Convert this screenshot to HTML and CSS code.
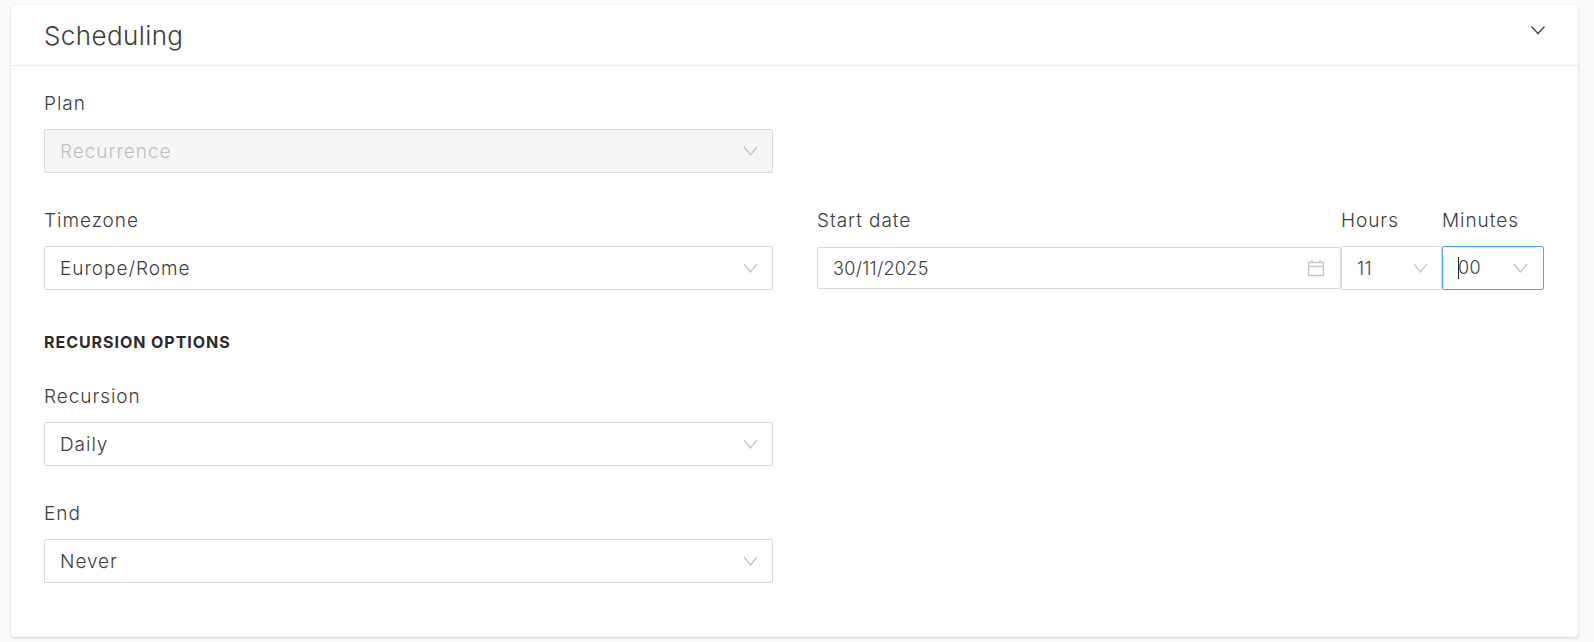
FILE: index.html
```html
<!DOCTYPE html>
<html lang="en">
<head>
    <meta charset="UTF-8">
    <title>Scheduling</title>
    <link rel="stylesheet" href="styles.css">
</head>
<body>
    <div class="card">
        <div class="card-header">
            <h2>Scheduling</h2>
            <svg class="collapse-icon" width="16" height="10" viewBox="0 0 16 10"><path d="M1.5 1.5L8 8.5L14.5 1.5"/></svg>
        </div>
        <form class="card-body">
            <div class="row">
                <div class="field">
                    <label>Plan</label>
                    <div class="select disabled">
                        <span>Recurrence</span>
                        <svg class="chevron" width="15" height="10" viewBox="0 0 15 10"><path d="M1 1L7.5 9L14 1"/></svg>
                    </div>
                </div>
            </div>
            <div class="row">
                <div class="field">
                    <label>Timezone</label>
                    <div class="select">
                        <span>Europe/Rome</span>
                        <svg class="chevron" width="15" height="10" viewBox="0 0 15 10"><path d="M1 1L7.5 9L14 1"/></svg>
                    </div>
                </div>
                <div class="datetime">
                    <div class="field date-field">
                        <label>Start date</label>
                        <div class="select date-input">
                            <span class="digits">30/11/2025</span>
                            <svg class="calendar" width="18" height="18" viewBox="0 0 18 18"><path d="M1.5 3.5H16.5V16.5H1.5ZM1.5 7.5H16.5M5 1V4M13 1V4"/></svg>
                        </div>
                    </div>
                    <div class="field hours-field">
                        <label>Hours</label>
                        <div class="select hours-select">
                            <span class="digits">11</span>
                            <svg class="chevron" width="15" height="10" viewBox="0 0 15 10"><path d="M1 1L7.5 9L14 1"/></svg>
                        </div>
                    </div>
                    <div class="field minutes-field">
                        <label>Minutes</label>
                        <div class="select focused">
                            <span class="digits caret-text">00</span>
                            <svg class="chevron" width="15" height="10" viewBox="0 0 15 10"><path d="M1 1L7.5 9L14 1"/></svg>
                        </div>
                    </div>
                </div>
            </div>
            <h3>RECURSION OPTIONS</h3>
            <div class="row">
                <div class="field">
                    <label>Recursion</label>
                    <div class="select">
                        <span>Daily</span>
                        <svg class="chevron" width="15" height="10" viewBox="0 0 15 10"><path d="M1 1L7.5 9L14 1"/></svg>
                    </div>
                </div>
            </div>
            <div class="row">
                <div class="field">
                    <label>End</label>
                    <div class="select">
                        <span>Never</span>
                        <svg class="chevron" width="15" height="10" viewBox="0 0 15 10"><path d="M1 1L7.5 9L14 1"/></svg>
                    </div>
                </div>
            </div>
        </form>
    </div>
</body>
</html>
```

FILE: styles.css
```css
/* Page */
body {
    font-family: Inter, "Liberation Sans", sans-serif;
    margin: 0;
    padding: 5px 16px 5px 11px;
    background-color: #fafafa;
    color: #3c3c3c;
}
.card {
    background-color: #ffffff;
    border-radius: 4px;
    box-shadow: 0 1px 3px rgba(0, 0, 0, 0.18);
    height: 632px;
}
.card-header {
    display: flex;
    justify-content: space-between;
    height: 60px;
    padding: 0 33px;
    border-bottom: 1px solid #ececec;
}
.card-header h2 {
    margin: 0;
    padding-top: 16px;
    font-size: 26px;
    line-height: 30px;
    font-weight: 300;
    letter-spacing: 0.4px;
}
.collapse-icon {
    margin: 20px -1px 0 0;
}
.collapse-icon path {
    fill: none;
    stroke: #555555;
    stroke-width: 1.6;
}
.card-body {
    padding: 26px 34px 0 33px;
}
.row {
    display: grid;
    grid-template-columns: 729px 1fr;
    column-gap: 44px;
    margin-bottom: 36px;
}
.field label {
    display: block;
    height: 24px;
    margin-bottom: 13px;
    font-size: 19px;
    line-height: 24px;
    font-weight: 300;
    letter-spacing: 0.95px;
    white-space: nowrap;
}
.select {
    display: flex;
    align-items: center;
    justify-content: space-between;
    box-sizing: border-box;
    height: 44px;
    padding: 0 14px 0 15px;
    border: 1px solid #d9d9d9;
    border-radius: 2px;
    font-size: 19px;
    font-weight: 300;
    letter-spacing: 0.95px;
}
.select.disabled {
    background-color: #f5f5f5;
    color: #bfbfbf;
}
.chevron path {
    fill: none;
    stroke: #c4c4c4;
    stroke-width: 1.3;
}
.calendar path {
    fill: none;
    stroke: #c4c4c4;
    stroke-width: 1.3;
}
.datetime {
    display: flex;
}
.date-field {
    flex: 1;
}
.date-input {
    height: 42px;
    margin-top: 14px;
    padding-right: 15px;
}
.hours-field {
    width: 101px;
}
.minutes-field {
    width: 102px;
}
.hours-select {
    padding-right: 13px;
}
.select .digits {
    font-size: 18px;
    letter-spacing: 0.3px;
}
.select.focused {
    border-color: #40a9ff;
    padding-right: 15px;
}
.caret-text::before {
    content: "";
    display: inline-block;
    width: 1px;
    height: 22px;
    margin-right: -1px;
    vertical-align: -5px;
    background-color: #222222;
}
h3 {
    margin: 42px 0 33px;
    font-size: 16px;
    line-height: 20px;
    font-weight: 700;
    letter-spacing: 0.95px;
    color: #2b2b2b;
}
```
